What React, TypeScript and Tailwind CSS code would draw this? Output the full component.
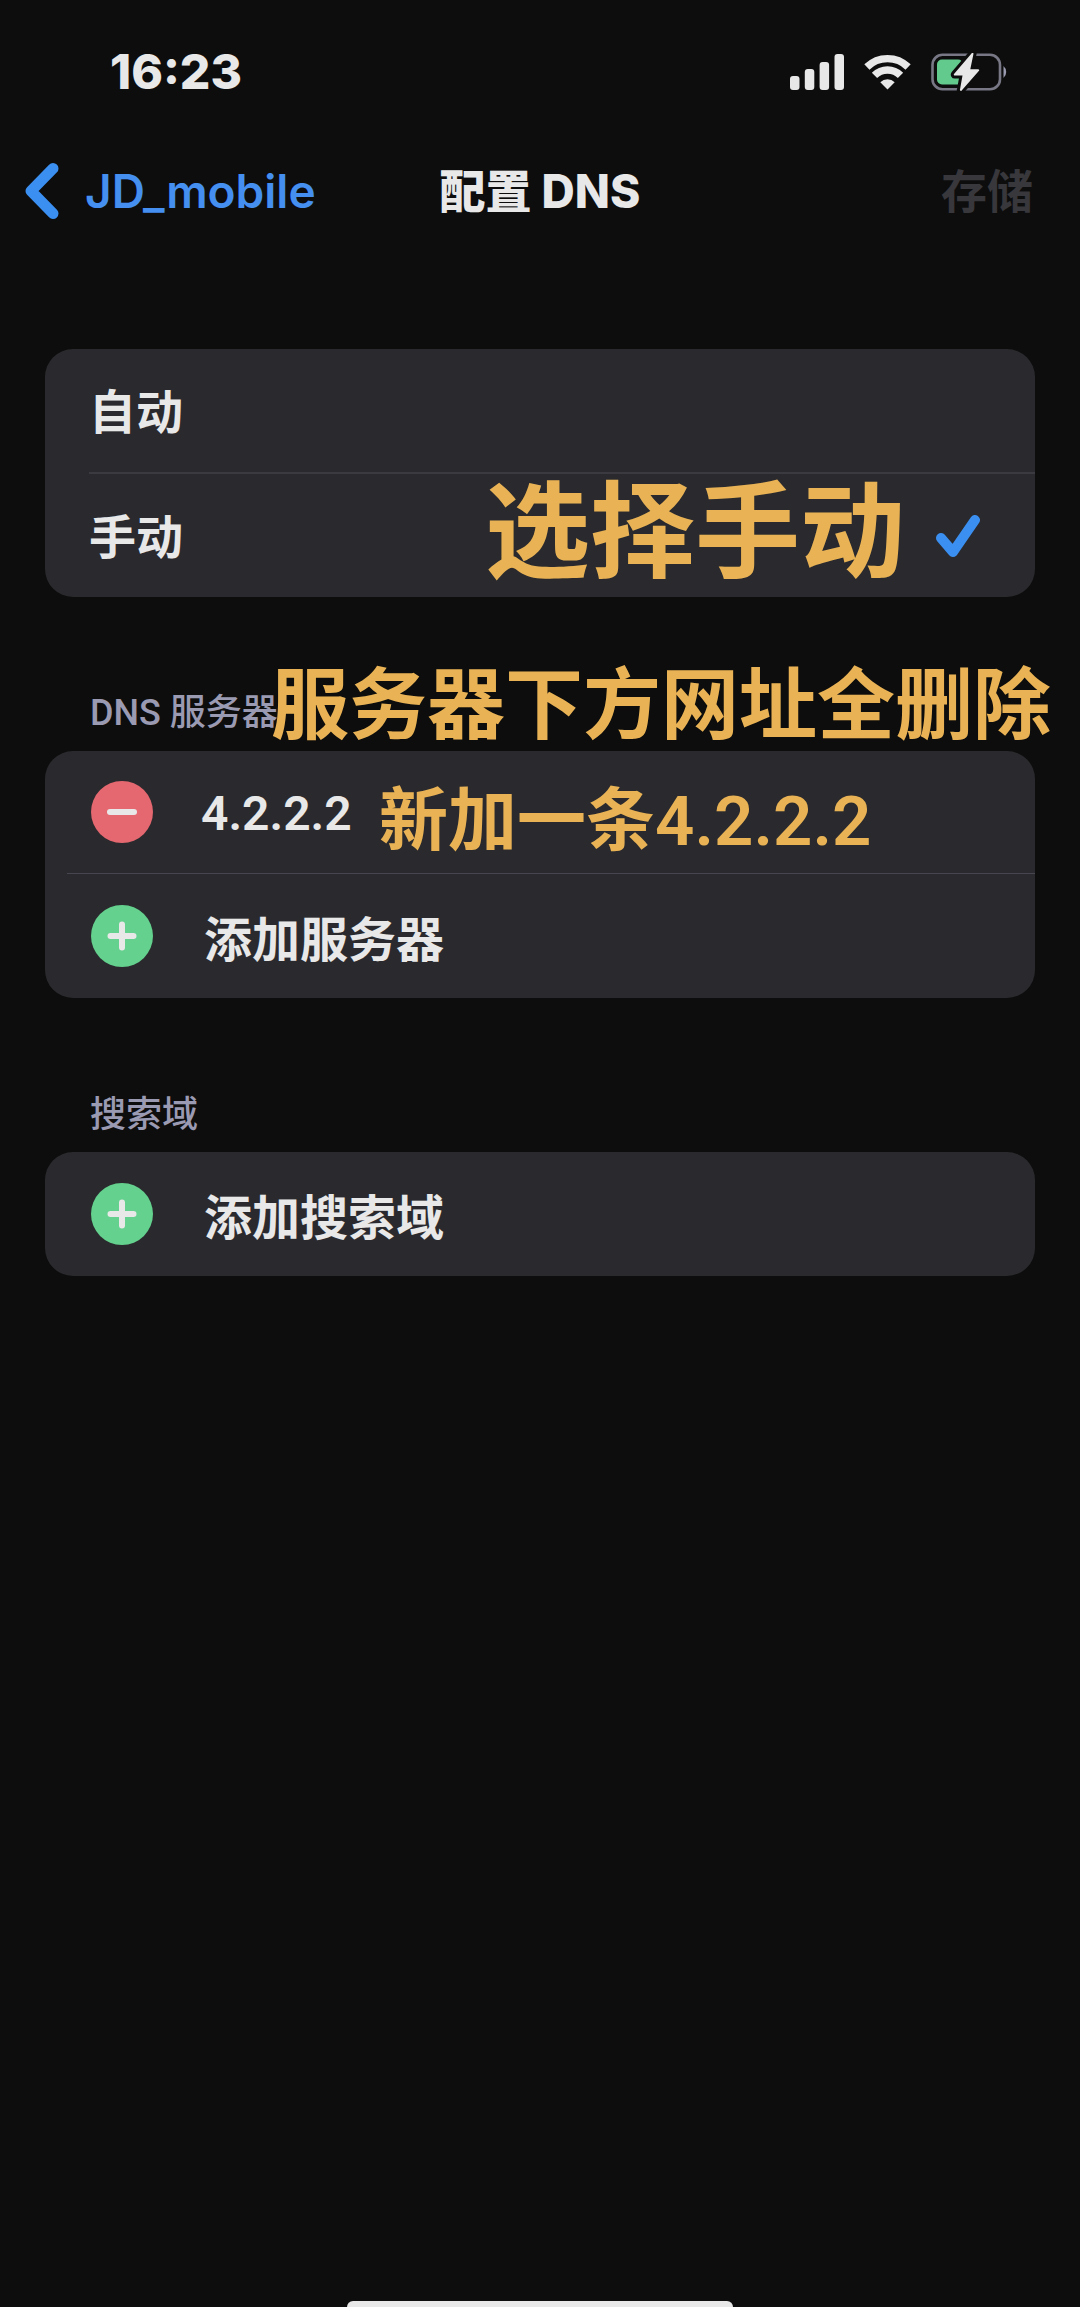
import { useState } from 'react';
import type { ReactNode } from 'react';

type Mode = 'auto' | 'manual';

const modes: { value: Mode; label: string; note?: string }[] = [
  { value: 'auto', label: '自动' },
  { value: 'manual', label: '手动', note: '选择手动' },
];

function SignalIcon() {
  return (
    <svg width="54" height="36" viewBox="0 0 54 36" fill="#e8e8e9" aria-hidden="true">
      <rect x="0" y="22" width="9.5" height="14" rx="3" />
      <rect x="14.8" y="15" width="9.5" height="21" rx="3" />
      <rect x="29.6" y="8" width="9.5" height="28" rx="3" />
      <rect x="44.5" y="0" width="9.5" height="36" rx="3" />
    </svg>
  );
}

function WifiIcon() {
  return (
    <svg width="47" height="36" viewBox="0.5 0 47 36" aria-hidden="true">
      <g fill="none" stroke="#e8e8e9" strokeWidth="7.4">
        <path d="M3.4 13 A29.5 29.5 0 0 1 44.6 13" />
        <path d="M11 21.4 A18.2 18.2 0 0 1 37 21.4" />
      </g>
      <path d="M24 35.5 L16.8 28.2 A10.4 10.4 0 0 1 31.2 28.2 Z" fill="#e8e8e9" />
    </svg>
  );
}

function BatteryIcon() {
  const bolt = 'M40.5 0.5 L23 21 a1 1 0 0 0 .8 1.6 H31.5 L29 36.5 a1 1 0 0 0 1.9 .8 L48 17.8 a1 1 0 0 0 -.8 -1.6 H39.3 L42.4 1.3 a1 1 0 0 0 -1.9 -.8 Z';
  return (
    <svg width="78" height="38" viewBox="0 0 78 38" aria-hidden="true">
      <rect x="1.5" y="1.8" width="67.5" height="34.4" rx="10" fill="none" stroke="#777785" strokeWidth="2.6" />
      <path d="M72.5 13 a8 8 0 0 1 0 12 Z" fill="#9a9ab0" />
      <rect x="6" y="6.5" width="26" height="25" rx="5" fill="#62ca8d" />
      <path d={bolt} fill="#0d0d0d" stroke="#0d0d0d" strokeWidth="6" strokeLinejoin="round" />
      <path d={bolt} fill="#e8e8e9" />
    </svg>
  );
}

function RoundIcon({ kind }: { kind: 'add' | 'remove' }) {
  return (
    <svg width="62" height="62" viewBox="0 0 62 62" className="shrink-0" aria-hidden="true">
      <circle cx="31" cy="31" r="31" fill={kind === 'add' ? '#64d28e' : '#e56870'} />
      <path
        d={kind === 'add' ? 'M19.5 31 H42.5 M31 19.5 V42.5' : 'M19 31 H43'}
        stroke="#e8e8e9"
        strokeWidth="6"
        strokeLinecap="round"
      />
    </svg>
  );
}

function Card({ children }: { children: ReactNode }) {
  return <div className="overflow-hidden rounded-[28px] bg-[#2a2a2e]">{children}</div>;
}

function AddRow({ label }: { label: string }) {
  return (
    <button type="button" className="flex h-[124px] w-full items-center gap-[51px] pl-[46px] text-left text-[48px] font-bold">
      <RoundIcon kind="add" />
      <span className="pt-2">{label}</span>
    </button>
  );
}

export default function App() {
  const [mode, setMode] = useState<Mode>('manual');
  const [server, setServer] = useState('4.2.2.2');

  return (
    <div className="flex min-h-screen flex-col bg-[#0d0d0d] font-['Inter','Noto_Sans_CJK_SC',sans-serif] text-[47px] leading-[64px] font-medium text-[#e8e8e9]">
      <div className="flex h-36 items-center justify-between pr-[71px] pl-[110px]">
        <time className="text-[48px] font-extrabold">16:23</time>
        <div className="flex items-center gap-5">
          <SignalIcon />
          <WifiIcon />
          <BatteryIcon />
        </div>
      </div>

      <header className="grid h-[94px] grid-cols-[1fr_auto_1fr] items-center px-[25px]">
        <button type="button" className="flex items-center gap-[26px] text-[46px] font-semibold text-[#448ff0]">
          <svg width="34" height="56" viewBox="0 0 34 56" fill="none" aria-hidden="true">
            <path d="M28 5.5 L6 28 L28 50.5" stroke="#3b8ff0" strokeWidth="11" strokeLinecap="round" strokeLinejoin="round" />
          </svg>
          JD_mobile
        </button>
        <h1 className="text-[46px] font-extrabold">配置 DNS</h1>
        <button type="button" disabled className="mr-[22px] justify-self-end text-[46px] font-bold text-[#37373c]">
          存储
        </button>
      </header>

      <main className="flex-1 px-[45px] pt-[111px]">
        <Card>
          <fieldset aria-label="配置 DNS">
            {modes.map((m, i) => (
              <label key={m.value} className="flex flex-col pl-[44px]">
                {i > 0 && <span className="h-0.5 bg-[#3a3a40]" />}
                <span className="flex h-[123px] items-center pr-[54px] font-bold">
                  <input
                    type="radio"
                    name="mode"
                    className="sr-only"
                    checked={mode === m.value}
                    onChange={() => setMode(m.value)}
                  />
                  <span className="pt-0.5">{m.label}</span>
                  {m.note && (
                    <span className="mr-[30px] ml-auto pb-2.5 text-[105px] leading-[110px] text-[#e9b355]">{m.note}</span>
                  )}
                  {mode === m.value && (
                    <svg width="46" height="44" viewBox="0 0 46 44" fill="none" aria-hidden="true">
                      <path d="M6 24 L18 38 L40 6" stroke="#3b8ff0" strokeWidth="10" strokeLinecap="round" strokeLinejoin="round" />
                    </svg>
                  )}
                </span>
              </label>
            ))}
          </fieldset>
        </Card>

        <section>
          <div className="relative flex h-[154px] items-end pb-3.5 pl-[45px]">
            <h2 className="font-['Roboto','Noto_Sans_CJK_SC',sans-serif] text-[36px] leading-[48px] text-[#9a9ab2]">
              DNS 服务器
            </h2>
            <span className="absolute bottom-0.5 left-[226px] text-[78px] leading-[88px] font-bold whitespace-nowrap text-[#e9b355]">
              服务器下方网址全删除
            </span>
          </div>
          <Card>
            <div className="flex h-[122px] items-center pl-[46px] font-['Roboto','Noto_Sans_CJK_SC',sans-serif]">
              <button type="button" aria-label="删除 4.2.2.2" className="mr-[48px]">
                <RoundIcon kind="remove" />
              </button>
              <input
                type="text"
                aria-label="DNS 服务器"
                value={server}
                onChange={e => setServer(e.target.value)}
                className="w-[178px] bg-transparent pt-1 text-[48px] font-semibold outline-none"
              />
              <span className="pt-5 text-[69px] leading-[88px] font-semibold whitespace-nowrap text-[#e9b355]">
                新加一条4.2.2.2
              </span>
            </div>
            <div className="ml-[22px] h-px bg-[#45464f]" />
            <AddRow label="添加服务器" />
          </Card>
        </section>

        <section>
          <div className="flex h-[154px] items-end pb-3.5 pl-[45px]">
            <h2 className="text-[36px] leading-[48px] text-[#9a9ab2]">搜索域</h2>
          </div>
          <Card>
            <AddRow label="添加搜索域" />
          </Card>
        </section>
      </main>

      <div className="mx-auto h-1.5 w-[386px] rounded-t-md bg-[#e8e8e9]" />
    </div>
  );
}
